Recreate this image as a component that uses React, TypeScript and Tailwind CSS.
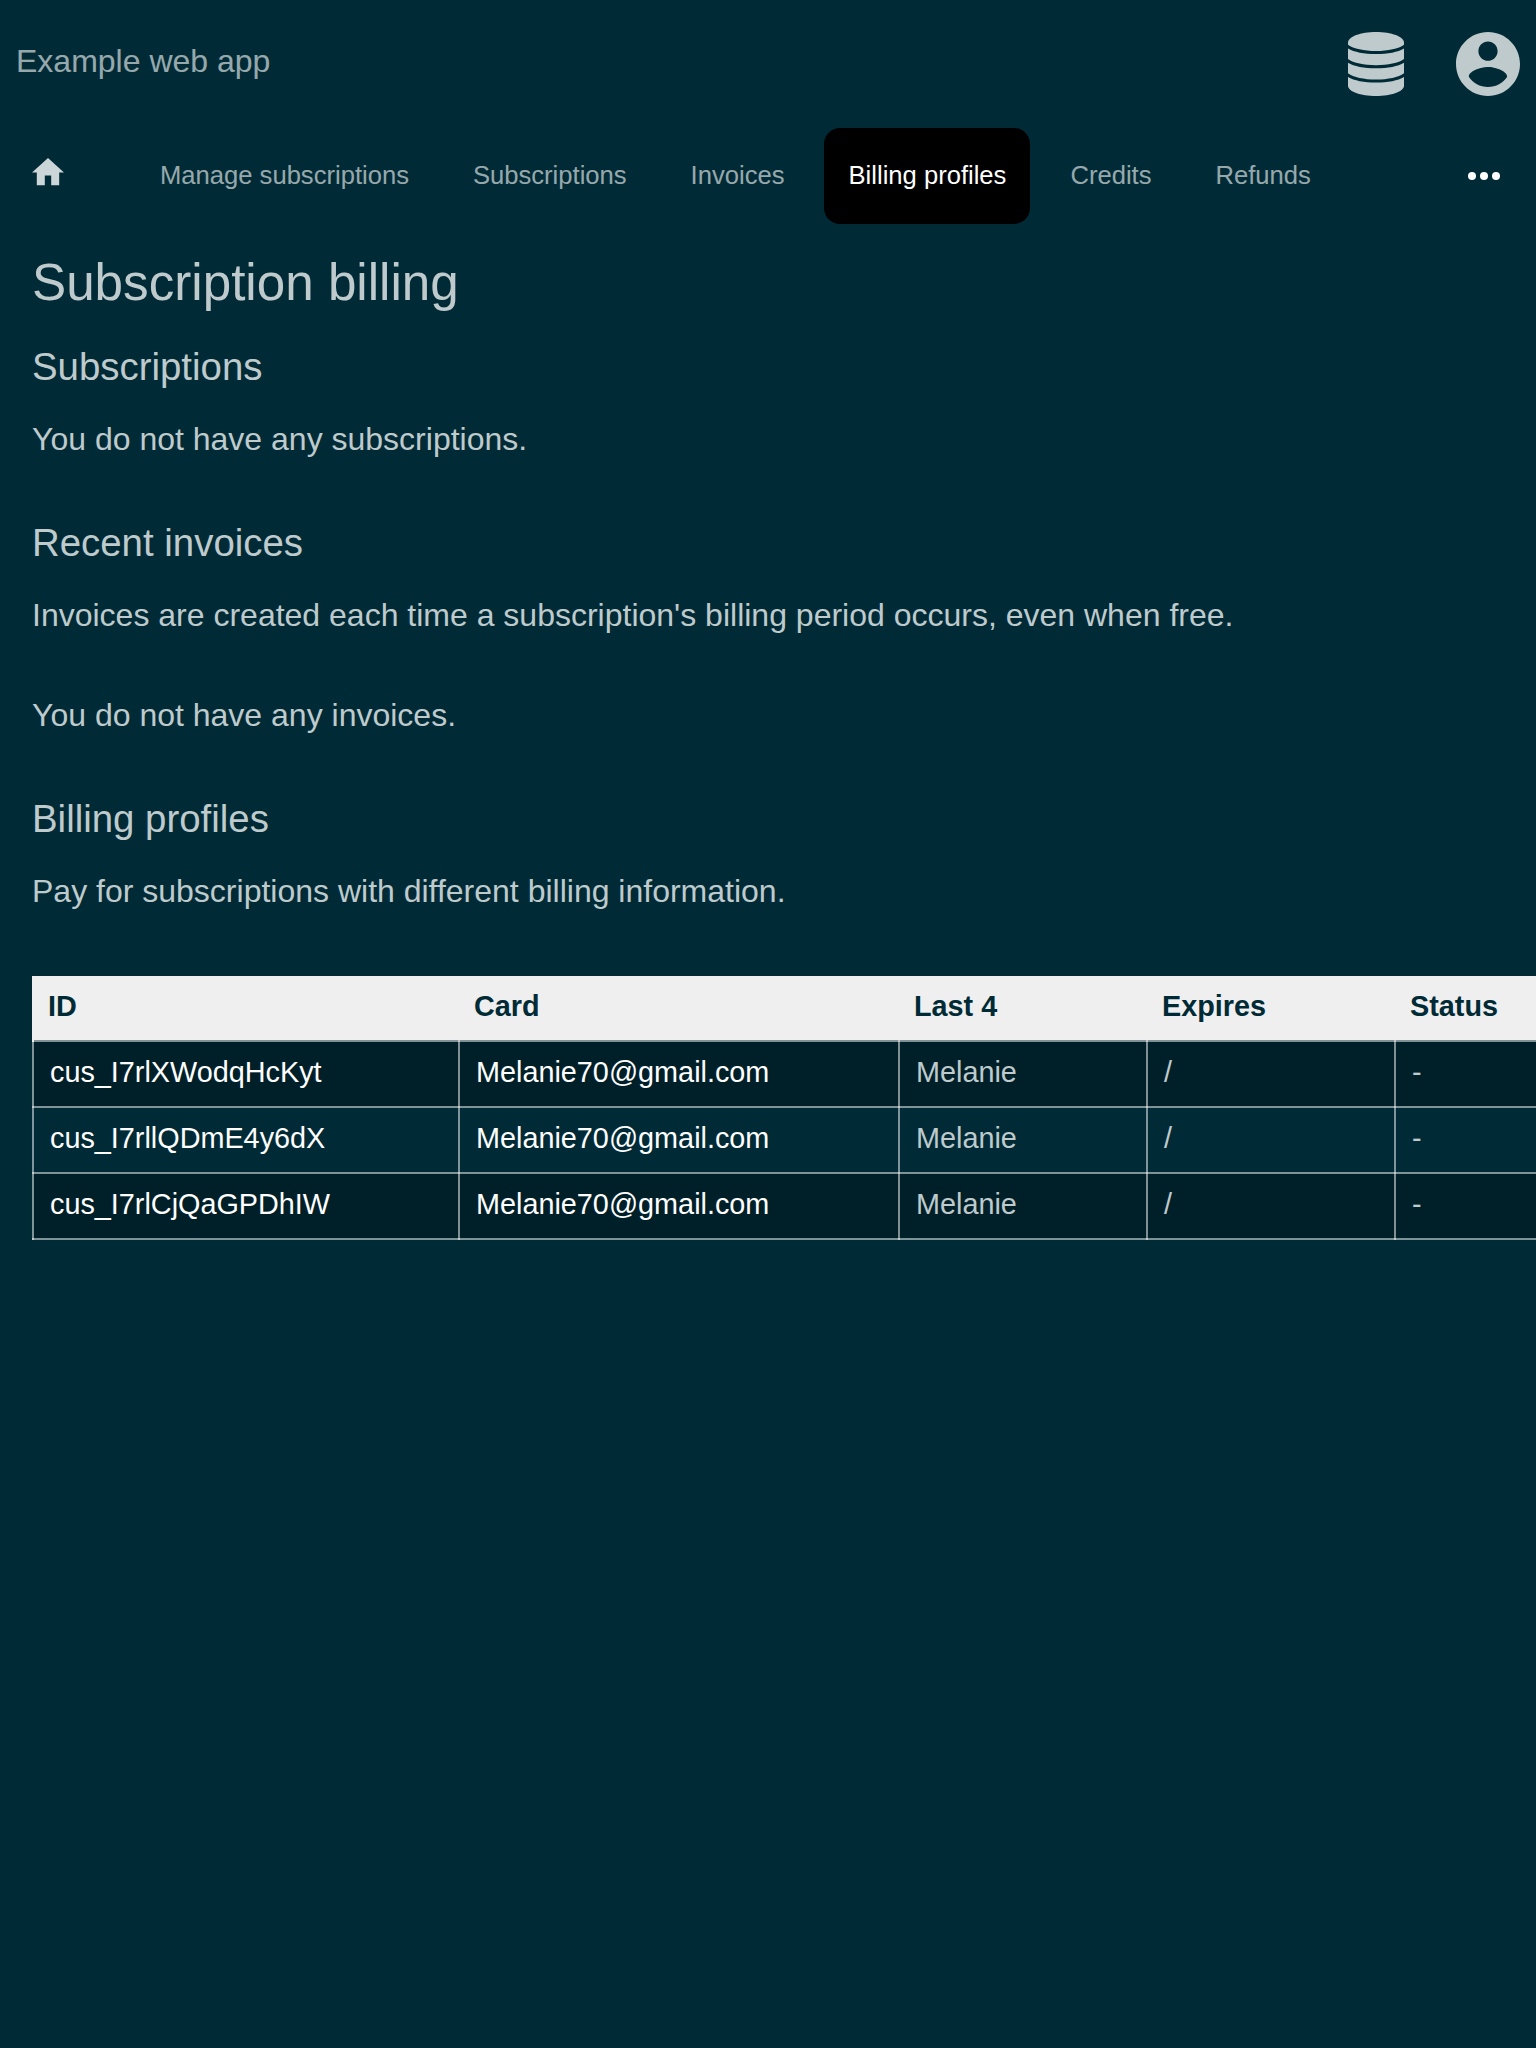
const TABS = ["Manage subscriptions", "Subscriptions", "Invoices", "Billing profiles", "Credits", "Refunds"];

const PROFILES = ["cus_I7rlXWodqHcKyt", "cus_I7rllQDmE4y6dX", "cus_I7rlCjQaGPDhIW"];

const COLUMNS = ["ID", "Card", "Last 4", "Expires", "Status"];

function DatabaseIcon() {
  return (
    <svg className="h-16 w-14" viewBox="0 0 56 64" fill="currentColor">
      <path d="M0 10.5C0 4.7 12.5 0 28 0S56 4.7 56 10.5V12.7C50.5 16.6 40 19 28 19S5.5 16.6 0 12.7Z" />
      <path d="M0 16.4C6 20 16 22 28 22S50 20 56 16.4V27C50.5 31 40 33.2 28 33.2S5.5 31 0 27Z" />
      <path d="M0 30.7C6 34.3 16 36.3 28 36.3S50 34.3 56 30.7V41.2C50.5 45.2 40 47.5 28 47.5S5.5 45.2 0 41.2Z" />
      <path d="M0 45C6 48.6 16 50.6 28 50.6S50 48.6 56 45V53.7C56 59.4 43.5 64 28 64S0 59.4 0 53.7Z" />
    </svg>
  );
}

function AccountIcon() {
  return (
    <svg className="size-16" viewBox="2 2 20 20" fill="currentColor">
      <path d="M12 2C6.48 2 2 6.48 2 12s4.48 10 10 10 10-4.48 10-10S17.52 2 12 2zm0 3c1.66 0 3 1.34 3 3s-1.34 3-3 3-3-1.34-3-3 1.34-3 3-3zm0 14.2c-2.5 0-4.71-1.28-6-3.22.03-1.99 4-3.08 6-3.08 1.99 0 5.97 1.09 6 3.08-1.29 1.94-3.5 3.22-6 3.22z" />
    </svg>
  );
}

function Header() {
  return (
    <header className="flex h-32 items-center justify-between px-4">
      <div className="mt-[-6px] text-[32px] leading-[36px] text-white/60">Example web app</div>
      <div className="flex items-center gap-[52px] text-[#bfcacd]">
        <DatabaseIcon />
        <AccountIcon />
      </div>
    </header>
  );
}

function Nav() {
  return (
    <nav className="flex h-24 items-center pr-9 pl-8">
      <svg className="mt-[-8px] mr-[72px] h-[27.2px] w-8 text-[#ccd5d7]" viewBox="2 3 20 17" fill="currentColor">
        <path d="M10 20v-6h4v6h5v-8h3L12 3 2 12h3v8z" />
      </svg>
      <div className="flex flex-1 gap-4">
        {TABS.map((tab) => (
          <a
            key={tab}
            className={
              tab === "Billing profiles"
                ? "-ml-px flex h-24 items-center rounded-2xl bg-black pr-6 pb-0.5 pl-[25px] text-[25.6px] whitespace-nowrap text-white"
                : "flex h-24 items-center px-6 pb-0.5 text-[25.6px] whitespace-nowrap text-white/60"
            }
          >
            {tab}
          </a>
        ))}
      </div>
      <svg className="h-2 w-8" viewBox="0 0 32 8" fill="white">
        <circle cx="4" cy="4" r="4" />
        <circle cx="16" cy="4" r="4" />
        <circle cx="28" cy="4" r="4" />
      </svg>
    </nav>
  );
}

function ProfilesTable() {
  return (
    <table className="w-[1612px] table-fixed border-collapse text-[28.8px] leading-8">
      <colgroup>
        <col className="w-[426px]" />
        <col className="w-[440px]" />
        <col className="w-[248px]" />
        <col className="w-[248px]" />
        <col className="w-[248px]" />
      </colgroup>
      <thead>
        <tr className="h-[65px] bg-[linear-gradient(#efefef_64px,#002b36_64px)] text-left text-[#002b36]">
          {COLUMNS.map((c) => (
            <th
              key={c}
              className="px-[15px] py-0 pb-1 font-bold first:border-l-2 first:border-[#efefef] first:pl-[14px]"
            >
              {c}
            </th>
          ))}
        </tr>
      </thead>
      <tbody>
        {PROFILES.map((id) => (
          <tr key={id} className="h-[66px] odd:bg-[#002029] [&>td]:border-2 [&>td]:border-white/50 [&>td]:px-4 [&>td]:py-0 [&>td]:pb-1">
            <td className="text-white">{id}</td>
            <td className="text-white">Melanie70@gmail.com</td>
            <td>Melanie</td>
            <td>/</td>
            <td>-</td>
          </tr>
        ))}
      </tbody>
    </table>
  );
}

export default function App() {
  return (
    <div className="h-[2048px] w-[1536px] overflow-hidden bg-[#002b36] font-['Liberation_Sans',Arial,sans-serif] text-[#bfcacd]">
      <Header />
      <Nav />
      <main className="pt-[29px] pl-8">
        <h1 className="text-[51.2px] leading-[60px]">Subscription billing</h1>
        <section className="pt-8">
          <h2 className="text-[38.4px] leading-[44px]">Subscriptions</h2>
          <p className="pt-8 text-[32px] leading-9">You do not have any subscriptions.</p>
        </section>
        <section className="pt-16">
          <h2 className="text-[38.4px] leading-[44px]">Recent invoices</h2>
          <p className="pt-8 text-[32px] leading-9">
            Invoices are created each time a subscription's billing period occurs, even when free.
          </p>
          <p className="pt-16 text-[32px] leading-9">You do not have any invoices.</p>
        </section>
        <section className="pt-16">
          <h2 className="text-[38.4px] leading-[44px]">Billing profiles</h2>
          <p className="pt-8 pb-[67px] text-[32px] leading-9">Pay for subscriptions with different billing information.</p>
          <ProfilesTable />
        </section>
      </main>
    </div>
  );
}
